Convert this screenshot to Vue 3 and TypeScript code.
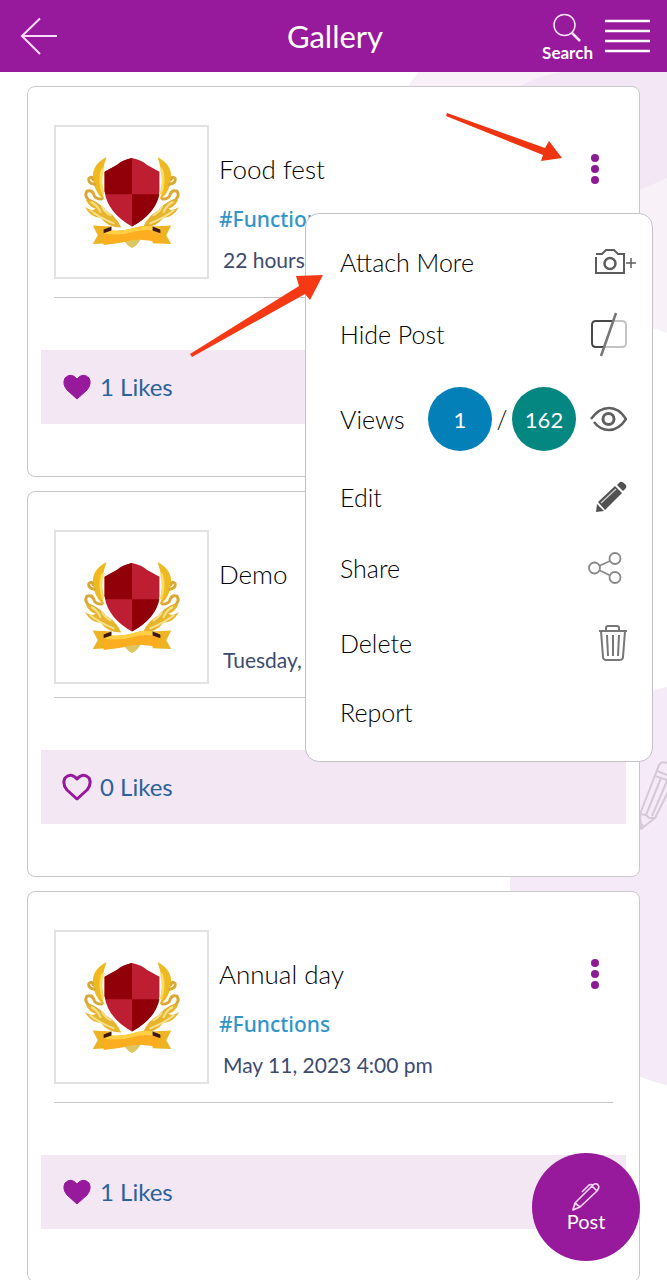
<script setup lang="ts">
import { ref } from 'vue'

interface Post {
  id: number
  title: string
  tag: string
  date: string
  likes: number
  liked: boolean
}

const posts = ref<Post[]>([
  { id: 1, title: 'Food fest', tag: '#Functions', date: '22 hours', likes: 1, liked: true },
  { id: 2, title: 'Demo', tag: '', date: 'Tuesday,', likes: 0, liked: false },
  { id: 3, title: 'Annual day', tag: '#Functions', date: 'May 11, 2023 4:00 pm', likes: 1, liked: true },
])

const openMenu = ref<number | null>(1)

function toggleMenu(id: number) {
  openMenu.value = openMenu.value === id ? null : id
}

function toggleLike(post: Post) {
  post.liked = !post.liked
  post.likes += post.liked ? 1 : -1
}
</script>

<template>
  <div class="screen">
    <svg class="backdrop" width="667" height="1280" viewBox="0 0 667 1280" aria-hidden="true">
      <path d="M418 72 L408 86 Q400 260 560 310 Q630 318 667 333 V72Z" fill="#f8f1f8" />
      <path d="M520 86 Q538 76 562 72 H667 V178 L640 190 Q560 210 520 150Z" fill="#f3e6f5" />
      <circle cx="715" cy="886" r="205" fill="#f5eaf8" />
      <g fill="none" stroke="#d5c8d8" stroke-width="2" stroke-linejoin="round">
        <path d="M659 765 L640 814 L641 829 L655 818 L680 768 M659 765 Q661 761 667 763 M657 771 L672 777 M655 776 L670 781 M646 815 L661 778 M652 816 L667 781 M640 814 L646 815 L649 818 L655 818 M641 824 L645 827" />
      </g>
    </svg>

    <header class="topbar">
      <button class="back" aria-label="Back">
        <svg width="38" height="38" viewBox="0 0 38 38"><path d="M20 1.500 L2 19 L20 37 M2 19 H37" fill="none" stroke="#fbdcff" stroke-width="2" /></svg>
      </button>
      <h1>Gallery</h1>
      <div class="bar-actions">
        <button class="search">
          <svg width="34" height="30" viewBox="0 0 34 30" fill="none" stroke="#fbe4ff"><circle cx="13.500" cy="12" r="10.500" stroke-width="1.500" /><path d="M21 20 L29 28" stroke-width="2.500" /></svg>
          <span>Search</span>
        </button>
        <button aria-label="Menu">
          <svg width="45" height="34" viewBox="0 0 45 34"><path d="M0 2 H45 M0 12 H45 M0 22 H45 M0 32 H45" stroke="#fff" stroke-width="2.500" /></svg>
        </button>
      </div>
    </header>

    <main class="feed">
      <article v-for="post in posts" :key="post.id" class="card">
        <div class="head">
          <div class="thumb">
            <svg width="96" height="96" viewBox="0 0 98 98" role="img" aria-label="School crest">
              <g v-for="side in ['', 'translate(98 0) scale(-1 1)']" :key="side" :transform="side">
                <path d="M23 3 Q5 12 10 31 Q13 42 21 47 Q14 29 23 3Z" fill="#efb921" />
                <path d="M19 15 Q15 28 20 41" fill="none" stroke="#fbdc60" stroke-width="3" />
                <path d="M11 31 Q4 30 5 25 Q8 22 9 26 M18 46 Q11 46 10 41 Q8 36 3 38 Q0 43 5 47 Q13 50 20 57" fill="none" stroke="#d9a835" stroke-width="3" stroke-linecap="round" />
                <path d="M2 47 Q12 46 18 56 Q31 60 38 75 Q24 75 17 65 Q7 65 1 54 Q8 59 12 56 Q5 54 2 47Z" fill="#e7b52d" />
                <path d="M7 49 Q14 52 17 60 M6 57 Q15 65 31 71 M18 53 Q21 60 28 63" fill="none" stroke="#f8e08c" stroke-width="2" />
              </g>
              <path d="M49 2 Q59 4 64 9 L78 17 V38 Q75 62 49 75 Q23 62 20 38 V17 L34 9 Q39 4 49 2Z" fill="#fff" />
              <path d="M49 4 Q59 6 64 11 L77 18 V38 Q74 60 49 74 Q24 60 21 38 V18 L34 11 Q39 6 49 4Z" fill="#be1e31" />
              <path d="M49 4 Q39 6 34 11 L21 18 V38 L22 41 H49Z M49 41 V74 Q73 61 77 41Z" fill="#910008" />
              <path d="M40 87 Q49 81 58 87 Q54 94 49 96 Q44 94 40 87Z" fill="#ddc661" />
              <path d="M9 73 L28 74 V91 L9 92 L14 83Z M89 73 L70 74 V91 L89 92 L84 83Z" fill="#edb323" />
              <path d="M20 77 Q34 80 49 76 Q64 71 78 76 V91 Q64 86 49 88 Q34 92 20 93Z" fill="#fcae20" />
              <path d="M20 79 Q34 82 49 78 Q64 73 78 78" fill="none" stroke="#ffd043" stroke-width="4" />
              <path d="M20 77 L28 74 V78 L20 81Z M78 77 L70 74 V78 L78 81Z" fill="#401810" />
            </svg>
          </div>
          <div class="info">
            <h2>{{ post.title }}</h2>
            <a v-if="post.tag" class="tag" href="#functions">{{ post.tag }}</a>
            <div v-else class="no-tag"></div>
            <p class="date">{{ post.date }}</p>
          </div>
          <button class="more" aria-label="Post options" @click="toggleMenu(post.id)">
            <i></i><i></i><i></i>
          </button>
        </div>
        <div class="likes">
          <button class="like" @click="toggleLike(post)">
            <svg width="30" height="28" viewBox="0 0 30 28"><path d="M15 26 L5 17 Q0 11 3 5 Q9 -1 15 6 Q21 -1 27 5 Q30 11 25 17Z" :fill="post.liked ? '#97199c' : 'none'" stroke="#97199c" :stroke-width="post.liked ? 1 : 3" stroke-linejoin="round" /></svg>
            <span>{{ post.likes }} Likes</span>
          </button>
        </div>

        <div v-if="openMenu === post.id" class="menu">
          <button class="item">
            <span>Attach More</span>
            <svg width="44" height="30" viewBox="0 0 44 30" fill="none" stroke="#5d5d5d"><path d="M4 10 V26 H32 V7 H26 L22 3 H14 L10 7 H4" stroke-width="2" /><circle cx="18" cy="16.500" r="5.500" stroke-width="2.500" /><path d="M34 16 H44 M39 11 V21" stroke-width="1.500" /></svg>
          </button>
          <button class="item">
            <span>Hide Post</span>
            <svg class="hide" width="36" height="46" viewBox="0 0 36 46" fill="none"><path d="M22 10 H31 Q35 10 35 14 V32 Q35 36 31 36 H14" stroke="#c4c4c4" stroke-width="2" /><path d="M22 10 H5 Q1 10 1 14 V32 Q1 36 5 36 H14" stroke="#484848" stroke-width="2" /><path d="M25 2 L10 45" stroke="#777" stroke-width="2.500" /></svg>
          </button>
          <button class="item views">
            <span>Views</span>
            <span class="counts"><b class="seen">1</b><em>/</em><b class="total">162</b></span>
            <svg class="eye" width="38" height="28" viewBox="0 0 38 28" fill="none" stroke="#5f5f5f"><path d="M2 14 Q10 3 20 3 Q30 3 37 14 Q30 25 20 25 Q11 25 5 17" stroke-width="2.500" /><circle cx="19.500" cy="14" r="5.500" stroke-width="3" /></svg>
          </button>
          <button class="item edit">
            <span>Edit</span>
            <svg class="pencil" width="32" height="32" viewBox="0 0 32 32"><path d="M1 31 L2 23 L9 30Z M3 21 L20 5 L27 12 L10 29Z M22 4 L25 1 Q27 0 30 3 Q32 5 31 7 L28 10Z" fill="#515151" /><path d="M6 22 L21 8" stroke="#ccc" stroke-width="1.500" /></svg>
          </button>
          <button class="item share">
            <span>Share</span>
            <svg class="nodes" width="34" height="34" viewBox="0 0 34 34" fill="none" stroke="#888" stroke-width="1.800"><circle cx="6.500" cy="17" r="5.500" /><circle cx="27" cy="7.500" r="5.500" /><circle cx="27" cy="26.500" r="5.500" /><path d="M12 14.500 L22 10 M12 19.500 L22 24.500" /></svg>
          </button>
          <button class="item delete">
            <span>Delete</span>
            <svg class="bin" width="28" height="38" viewBox="0 0 28 38" fill="none" stroke="#777" stroke-width="2"><path d="M0 7 H28 M7 7 V4 Q7 2 9 2 H18 Q20 2 20 4 V7 M2 7 L4 33 Q4 36 8 36 H20 Q24 36 24 33 L26 7" /><path d="M8 11 L9 32 M14 11 V32 M20 11 L19 32" /></svg>
          </button>
          <button class="item"><span>Report</span></button>
        </div>
      </article>
    </main>

    <button class="compose">
      <svg width="30" height="28" viewBox="0 0 30 28" fill="none" stroke="#f6d5fa" stroke-width="1.700" stroke-linejoin="round"><path d="M2 27 L4 20 L21 3 L26 8 L9 24Z M4 20 L9 24 M21 3 Q25 -1 27 2 Q29 4 26 8 M11 9 L18 2 Q20 1 22 2" /></svg>
      <span>Post</span>
    </button>

    <svg class="pointers" width="667" height="1280" viewBox="0 0 667 1280" aria-hidden="true">
      <path d="M447 113 L545 148 L549 141 L562 158 L541 161 L543 155 L446 116Z" fill="#ef3412" />
      <path d="M190 354 L299 286 L296 276 L323 275 L310 300 L305 294 L192 357Z" fill="#f53914" />
    </svg>
  </div>
</template>

<style>
body {
  margin: 0;
  background: #fff;
}
</style>

<style scoped>
.screen {
  position: relative;
  height: 100vh;
  overflow: hidden;
  background: #fff;
  font-family: Lato, "Liberation Sans", sans-serif;
  font-weight: 300;
}
.screen * {
  box-sizing: border-box;
}
button {
  margin: 0;
  padding: 0;
  border: 0;
  background: none;
  color: inherit;
  font: inherit;
  cursor: pointer;
}
svg {
  display: block;
  flex: none;
}
.backdrop {
  position: absolute;
  top: 0;
  right: 0;
}
.pointers {
  position: absolute;
  top: 0;
  left: 0;
  z-index: 5;
  pointer-events: none;
}
.topbar {
  position: relative;
  display: grid;
  grid-template-columns: 1fr auto 1fr;
  align-items: center;
  height: 72px;
  padding: 0 17px 0 20px;
  background: #97199c;
  color: #fff;
}
.back {
  justify-self: start;
}
h1 {
  margin: 0;
  font-size: 31px;
  line-height: 40px;
  font-weight: 400;
}
.bar-actions {
  display: flex;
  justify-content: flex-end;
  align-items: center;
  gap: 12px;
}
.search {
  display: flex;
  flex-direction: column;
  align-items: center;
  padding-top: 3px;
  font-size: 17px;
  line-height: 20px;
  font-weight: 700;
}
.feed {
  position: relative;
  display: flex;
  flex-direction: column;
  gap: 14px;
  padding: 14px 27px;
}
.card {
  position: relative;
  flex: none;
  padding: 38px 13px 52px;
  border: 1px solid #c9c9cb;
  border-radius: 8px;
  background: #fff;
}
.head {
  display: flex;
  align-items: flex-start;
  margin: 0 13px;
  border-bottom: 1px solid #c4c4c4;
}
.thumb {
  display: flex;
  flex: none;
  align-items: center;
  justify-content: center;
  width: 155px;
  height: 154px;
  border: 2px solid #e2e2e2;
}
.info {
  flex: 1;
  padding: 28px 0 23px 10px;
}
h2 {
  margin: 0 0 22px;
  color: #000;
  font-size: 26px;
  line-height: 32px;
  font-weight: 300;
}
.tag {
  display: block;
  color: #3195c9;
  font-family: "Noto Sans", sans-serif;
  font-size: 21px;
  line-height: 24px;
  font-weight: 500;
  text-decoration: none;
}
.no-tag {
  height: 19px;
}
.date {
  margin: 15px 0 0 4px;
  color: #3d4b70;
  font-size: 21px;
  line-height: 28px;
  font-weight: 400;
}
.more {
  display: flex;
  flex-direction: column;
  align-items: center;
  gap: 3px;
  width: 36px;
  margin-top: 29px;
}
.more i {
  width: 8px;
  height: 8px;
  border-radius: 50%;
  background: #8d1b93;
}
.likes {
  display: flex;
  align-items: center;
  height: 74px;
  margin-top: 52px;
  padding-left: 21px;
  background: #f3e7f4;
}
.like {
  display: flex;
  align-items: center;
  gap: 8px;
  color: #2b629b;
  font-size: 24px;
  line-height: 32px;
  font-weight: 400;
}
.menu {
  position: absolute;
  top: 126px;
  right: -14px;
  z-index: 3;
  width: 348px;
  padding: 12px 16px 13px 34px;
  border: 1px solid #c3c3c5;
  border-radius: 14px;
  background: #fff;
}
.item {
  display: flex;
  align-items: center;
  justify-content: space-between;
  width: 100%;
  height: 72px;
  color: #000;
  font-size: 25px;
  text-align: left;
}
.views {
  height: 98px;
}
.edit {
  height: 58px;
}
.share {
  height: 84px;
}
.delete {
  height: 66px;
}
.counts {
  display: flex;
  flex: 1;
  align-items: center;
  justify-content: flex-end;
  padding-right: 13px;
}
.counts b {
  display: flex;
  align-items: center;
  justify-content: center;
  width: 64px;
  height: 64px;
  border-radius: 50%;
  color: #fff;
  font-size: 22px;
  font-weight: 400;
}
.counts em {
  width: 20px;
  font-style: normal;
  text-align: center;
}
.seen {
  background: #0480b9;
}
.total {
  background: #048681;
}
.hide,
.pencil,
.bin,
.eye {
  margin-right: 9px;
}
.nodes {
  margin-right: 14px;
}
.compose {
  position: absolute;
  right: 27px;
  bottom: 19px;
  z-index: 4;
  display: flex;
  flex-direction: column;
  align-items: center;
  justify-content: center;
  width: 108px;
  height: 108px;
  border-radius: 50%;
  background: #97199c;
  color: #fff;
  font-size: 20px;
  line-height: 20px;
  font-weight: 400;
}
</style>
